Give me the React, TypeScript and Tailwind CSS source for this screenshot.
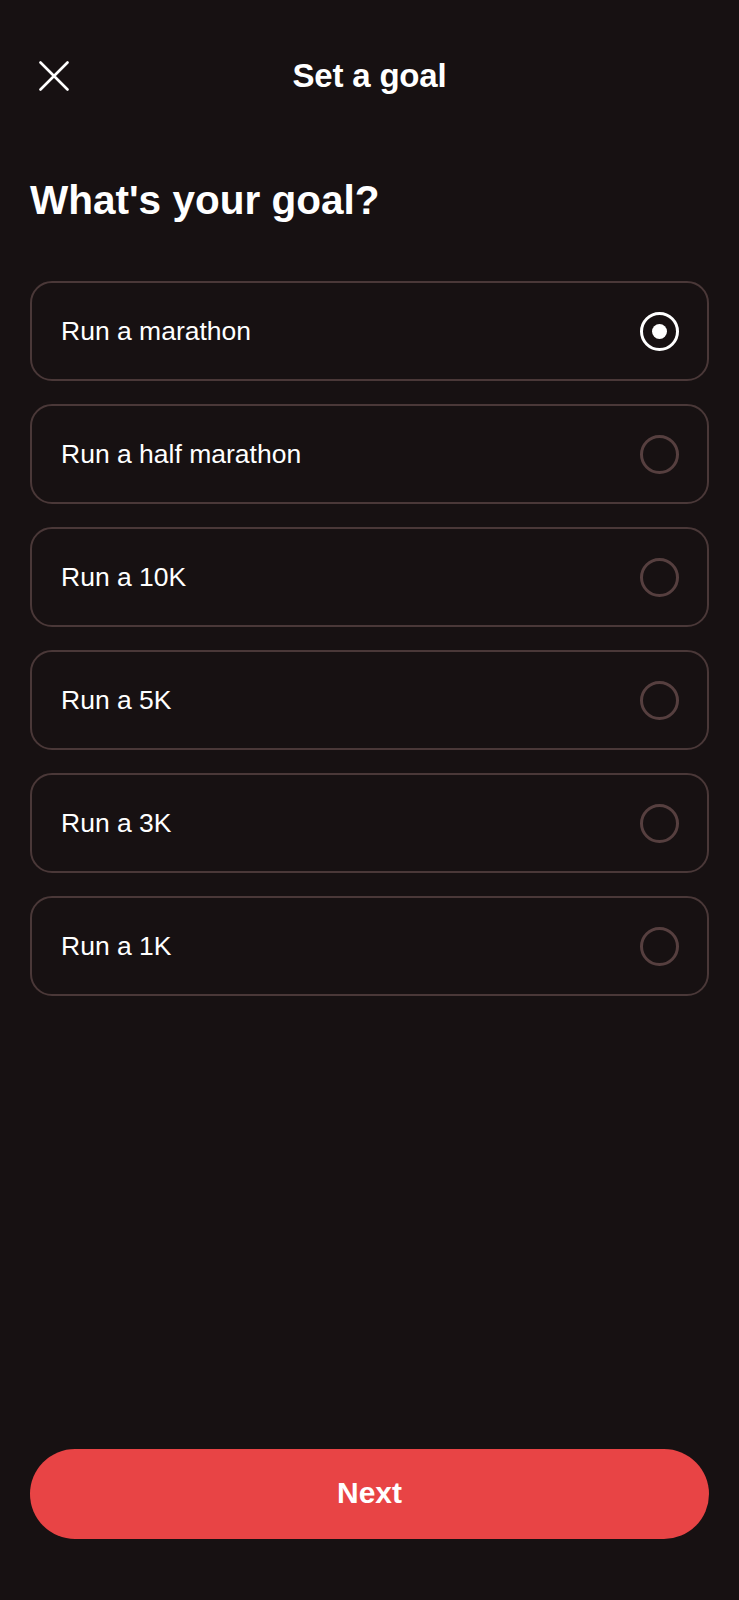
import { useState } from 'react'

const goals = [
  'Run a marathon',
  'Run a half marathon',
  'Run a 10K',
  'Run a 5K',
  'Run a 3K',
  'Run a 1K',
]

export default function App() {
  const [selected, setSelected] = useState(0)

  return (
    <div
      className="min-h-[1600px] w-full bg-[#171112] text-white flex flex-col"
      style={{ fontFamily: '"Liberation Sans", Arial, sans-serif' }}
    >
      {/* Header */}
      <div className="grid grid-cols-[1fr_auto_1fr] items-center h-[48px] mt-[52px] px-[39px]">
        <button className="w-[30px] h-[30px] flex items-center justify-center">
          <svg width="30" height="30" viewBox="0 0 30 30" fill="none">
            <path d="M1.5 1.5L28.5 28.5M28.5 1.5L1.5 28.5" stroke="white" strokeWidth="2.6" strokeLinecap="round" />
          </svg>
        </button>
        <h1 className="text-[33px] leading-[48px] font-bold tracking-[-0.2px]">Set a goal</h1>
        <div />
      </div>

      {/* Question */}
      <h2 className="mt-[76px] px-[30px] text-[40.5px] leading-[48px] font-bold">
        What's your goal?
      </h2>

      {/* Options */}
      <div className="mt-[57px] px-[30px] flex flex-col gap-[23px]">
        {goals.map((goal, index) => (
          <button
            key={goal}
            onClick={() => setSelected(index)}
            className="h-[100px] w-full rounded-[22px] border-2 border-[#4a3838] flex items-center justify-between pl-[29px] pr-[28px] text-left"
          >
            <span className="text-[26.5px] leading-none">{goal}</span>
            {selected === index ? (
              <span className="w-[39px] h-[39px] rounded-full border-[3.5px] border-white flex items-center justify-center">
                <span className="w-[15px] h-[15px] rounded-full bg-white" />
              </span>
            ) : (
              <span className="w-[39px] h-[39px] rounded-full border-[3.5px] border-[#563f3f]" />
            )}
          </button>
        ))}
      </div>

      {/* Next button */}
      <div className="mt-auto px-[30px] pb-[61px]">
        <button className="w-full h-[90px] rounded-full bg-[#e84445] text-white text-[30px] leading-none font-bold pb-[2px]">
          Next
        </button>
      </div>
    </div>
  )
}
